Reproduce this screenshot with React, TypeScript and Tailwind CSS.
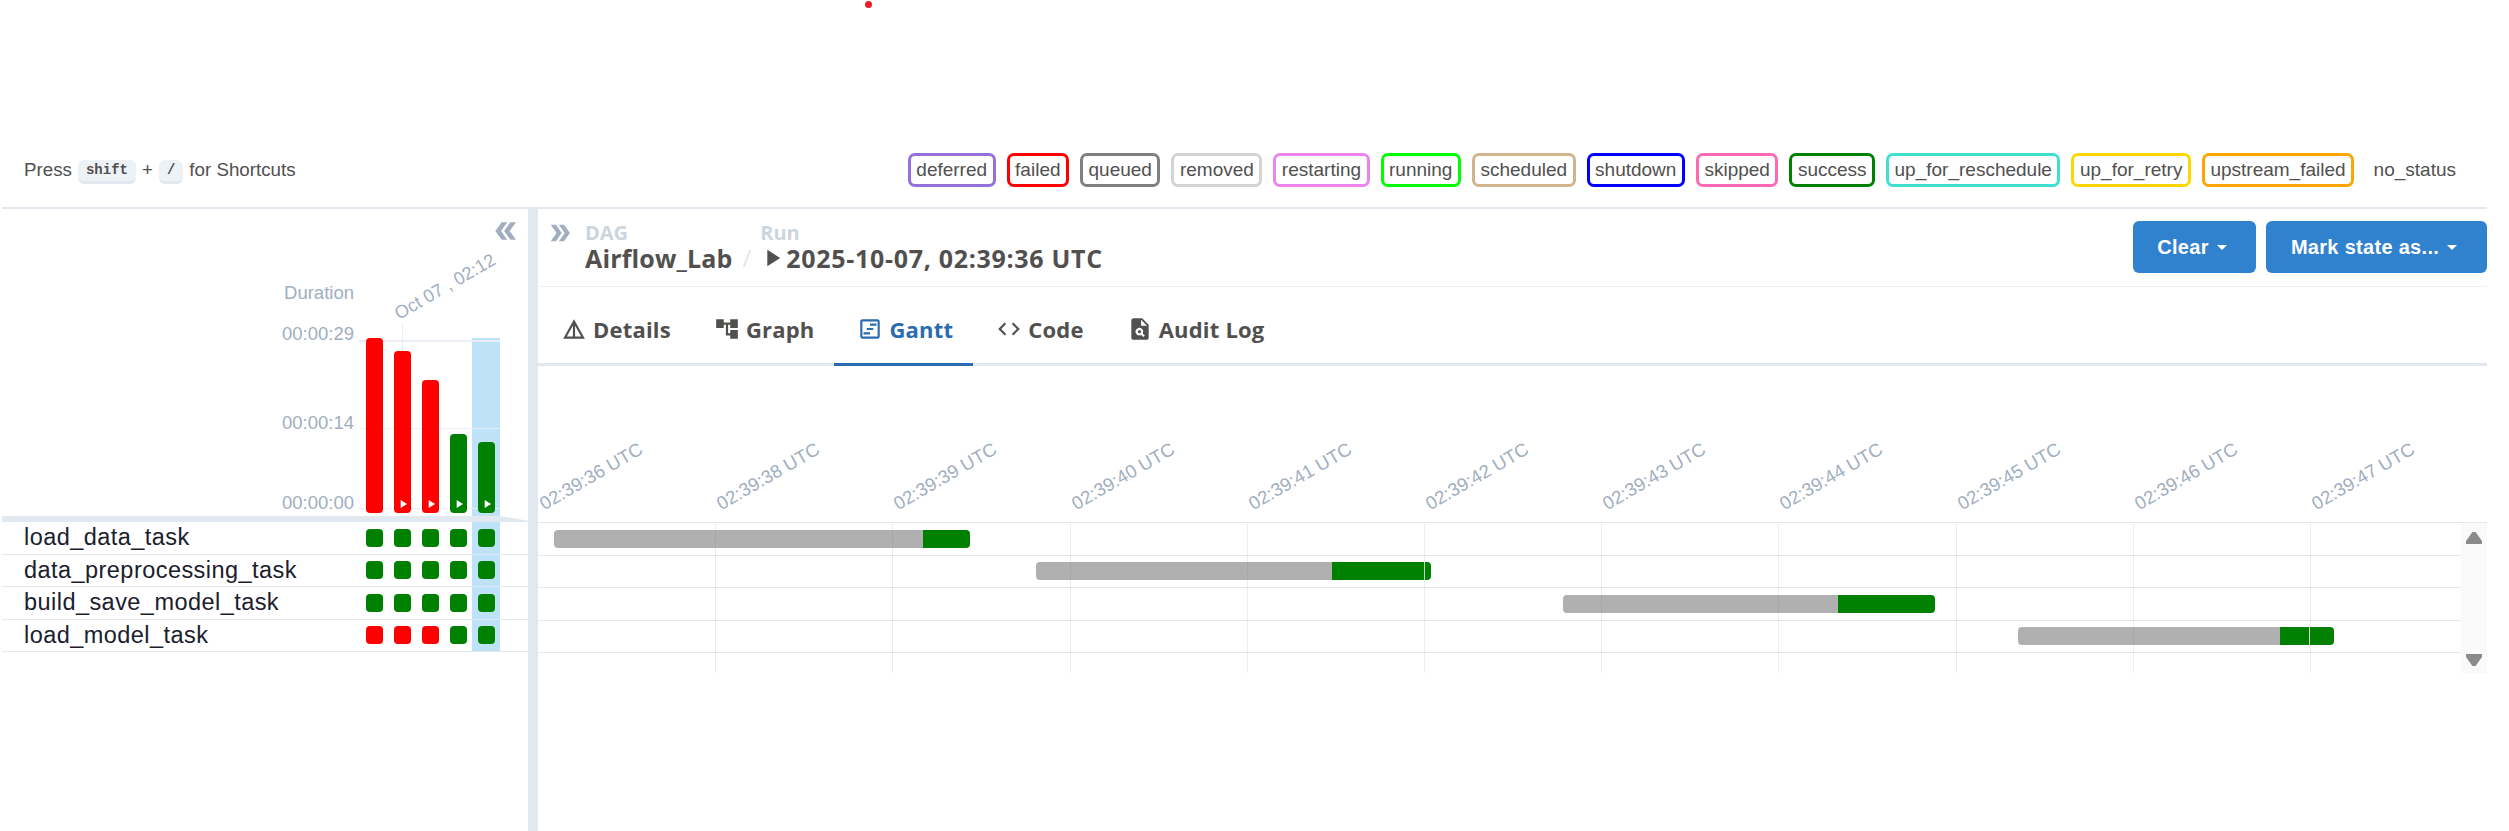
import { MdAccountTree, MdCode, MdDetails, MdDoubleArrow, MdOutlineViewTimeline, MdPlagiarism, MdPlayArrow, MdArrowDropDown } from 'react-icons/md';

const legend = [
  { label: 'deferred', border: 'border-[#9370db]' },
  { label: 'failed', border: 'border-[#ff0000]' },
  { label: 'queued', border: 'border-[#808080]' },
  { label: 'removed', border: 'border-[#d3d3d3]' },
  { label: 'restarting', border: 'border-[#ee82ee]' },
  { label: 'running', border: 'border-[#00ff00]' },
  { label: 'scheduled', border: 'border-[#d2b48c]' },
  { label: 'shutdown', border: 'border-[#0000ff]' },
  { label: 'skipped', border: 'border-[#ff69b4]' },
  { label: 'success', border: 'border-[#008000]' },
  { label: 'up_for_reschedule', border: 'border-[#40e0d0]' },
  { label: 'up_for_retry', border: 'border-[#ffd700]' },
  { label: 'upstream_failed', border: 'border-[#ffa500]' },
  { label: 'no_status', border: 'border-transparent' },
];

const durationBars = [
  { height: 'h-[175px]', color: 'bg-[#ff0000]', play: false },
  { height: 'h-[162px]', color: 'bg-[#ff0000]', play: true },
  { height: 'h-[133px]', color: 'bg-[#ff0000]', play: true },
  { height: 'h-[79px]', color: 'bg-[#008000]', play: true },
  { height: 'h-[71px]', color: 'bg-[#008000]', play: true },
];

const tasks = [
  { name: 'load_data_task', states: ['bg-[#008000]', 'bg-[#008000]', 'bg-[#008000]', 'bg-[#008000]', 'bg-[#008000]'] },
  { name: 'data_preprocessing_task', states: ['bg-[#008000]', 'bg-[#008000]', 'bg-[#008000]', 'bg-[#008000]', 'bg-[#008000]'] },
  { name: 'build_save_model_task', states: ['bg-[#008000]', 'bg-[#008000]', 'bg-[#008000]', 'bg-[#008000]', 'bg-[#008000]'] },
  { name: 'load_model_task', states: ['bg-[#ff0000]', 'bg-[#ff0000]', 'bg-[#ff0000]', 'bg-[#008000]', 'bg-[#008000]'] },
];

const ticks = ['02:39:36', '02:39:38', '02:39:39', '02:39:40', '02:39:41', '02:39:42', '02:39:43', '02:39:44', '02:39:45', '02:39:46', '02:39:47'];

const ganttRows = [
  { offset: 'ml-[16px]', queued: 'w-[369px]', run: 'w-[47px]', mark: '' },
  { offset: 'ml-[498px]', queued: 'w-[296px]', run: 'w-[99px]', mark: 'ml-[92px]' },
  { offset: 'ml-[1025px]', queued: 'w-[275px]', run: 'w-[97px]', mark: '' },
  { offset: 'ml-[1480px]', queued: 'w-[262px]', run: 'w-[54px]', mark: 'ml-[29px]' },
];

const tabs = [
  { label: 'Details', icon: MdDetails, active: false },
  { label: 'Graph', icon: MdAccountTree, active: false },
  { label: 'Gantt', icon: MdOutlineViewTimeline, active: true },
  { label: 'Code', icon: MdCode, active: false },
  { label: 'Audit Log', icon: MdPlagiarism, active: false },
];

function Kbd({ children }: { children: string }) {
  return (
    <span className="mt-[3px] inline-flex h-[24px] items-center rounded-[6px] border-b-[3px] border-[#e2e8f0] bg-[#edf2f7] px-[8px] font-['Liberation_Mono',monospace] text-[14px] font-bold text-[#51504f]">
      {children}
    </span>
  );
}

function ActionButton({ label, width }: { label: string; width: string }) {
  return (
    <button className={`flex h-[52px] items-center justify-center rounded-[6px] bg-[#3182ce] pr-[4px] text-[20px] font-bold tracking-[0.3px] text-white ${width}`}>
      {label}
      <MdArrowDropDown className="ml-[1px] -mr-[6px]" size={24} />
    </button>
  );
}

export default function App() {
  return (
    <div className="flex h-[831px] w-full flex-col overflow-hidden bg-white font-['Liberation_Sans',Arial,sans-serif] text-[#51504f]">
      <div className="h-[153px] shrink-0">
        <div className="ml-[865px] mt-px h-[7px] w-[7px] rounded-full bg-[#ed1c24]" />
      </div>

      <div className="ml-[2px] mr-[22px] flex h-[56px] shrink-0 items-start justify-between border-b-2 border-[#e2e8f0] pl-[22px] pr-[22.5px]">
        <div className="flex h-[34px] items-center gap-[6px] text-[18.75px]">
          <span>Press</span>
          <Kbd>shift</Kbd>
          <span>+</span>
          <Kbd>/</Kbd>
          <span>for Shortcuts</span>
        </div>
        <div className="flex gap-[11px]">
          {legend.map((item) => (
            <span key={item.label} className={`flex h-[34px] items-center rounded-[7px] border-[3px] px-[5.5px] text-[19px] ${item.border}`}>
              {item.label}
            </span>
          ))}
        </div>
      </div>

      <div className="flex min-h-0 flex-1">
        <div className="w-[528px] shrink-0">
          <div className="relative h-[307px]">
            <div className="flex justify-end pr-[7px] pt-[7px]">
              <MdDoubleArrow className="rotate-180 text-[#a0aec0]" size={30} />
            </div>
            <span className="absolute left-[403px] top-[91px] origin-bottom-left -rotate-[30deg] whitespace-nowrap text-[18px] text-[#a0aec0]">
              Oct 07 , 02:12
            </span>
            <div className="absolute left-0 top-[74px] flex">
              <div className="flex w-[354px] flex-col items-end text-[18.5px] leading-[20px] text-[#a0aec0]">
                <span>Duration</span>
                <span className="mt-[21px]">00:00:29</span>
                <span className="mt-[69px]">00:00:14</span>
                <span className="mt-[60px]">00:00:00</span>
              </div>
              <div className="relative ml-[5px] h-[233px] w-[141px]">
                <div className="absolute left-[113px] top-[55px] h-[178px] w-[28px] bg-[#bee3f8]" />
                <div className="absolute left-[43px] top-[41px] h-[190px] w-px bg-[#e8edf7]" />
                <div className="absolute left-0 top-[57px] h-[2px] w-full bg-[#e8edf7]" />
                <div className="absolute left-0 top-[145px] h-px w-full bg-[#e8edf7]" />
                <div className="absolute left-0 top-[225px] h-px w-full bg-[#e8edf7]" />
                <div className="absolute bottom-[3px] left-[7px] flex items-end gap-[11px]">
                  {durationBars.map((bar, i) => (
                    <div key={i} className={`flex w-[17px] items-end justify-center rounded-[4px] pb-[2px] ${bar.height} ${bar.color}`}>
                      {bar.play && <MdPlayArrow className="text-white" size={14} />}
                    </div>
                  ))}
                </div>
              </div>
            </div>
          </div>

          <div className="ml-[2px] h-[6px] bg-[#e2e8f0] [clip-path:polygon(0_0,498px_0,100%_80%,100%_100%,0_100%)]" />

          <div className="ml-[2px]">
            {tasks.map((task) => (
              <div key={task.name} className="flex h-[32.5px] items-stretch border-b border-[#e2e8f0]">
                <div className="flex w-[358px] items-center pl-[22px] text-[23.5px] leading-none tracking-[0.45px] text-[#1a202c]">
                  {task.name}
                </div>
                {task.states.map((state, i) => (
                  <div key={i} className={`flex w-[28px] items-center justify-center ${i === 4 ? 'bg-[#bee3f8]' : ''}`}>
                    <div className={`h-[18px] w-[17px] rounded-[4px] ${state}`} />
                  </div>
                ))}
              </div>
            ))}
          </div>
        </div>

        <div className="w-[10px] shrink-0 bg-[#e2e8f0]" />

        <div className="flex min-w-0 flex-1 flex-col">
          <div className="mr-[22px] flex h-[78px] shrink-0 justify-between border-b border-[#edf2f7] pt-[12px]">
            <div className="flex font-['Open_Sans',sans-serif] font-bold">
              <MdDoubleArrow className="ml-[8px] -mt-[2px] text-[#a0aec0]" size={28} />
              <div className="ml-[11px] flex flex-col">
                <span className="mt-[1px] text-[20px] leading-[22px] text-[#cbd5e0]">DAG</span>
                <span className="-mt-[1px] text-[25px] leading-[30px] tracking-[0.15px]">Airflow_Lab</span>
              </div>
              <span className="ml-[10px] mt-[22px] text-[24px] font-normal leading-[30px] text-[#e2e8f0]">/</span>
              <div className="ml-[9px] flex flex-col">
                <span className="mt-[1px] text-[20px] leading-[22px] text-[#cbd5e0]">Run</span>
                <span className="-mt-[1px] flex items-center text-[25px] leading-[30px] tracking-[0.7px]">
                  <MdPlayArrow className="-ml-[2px]" size={28} />
                  2025-10-07, 02:39:36 UTC
                </span>
              </div>
            </div>
            <div className="flex gap-[10px]">
              <ActionButton label="Clear" width="w-[123px]" />
              <ActionButton label="Mark state as..." width="w-[221px]" />
            </div>
          </div>

          <div className="mr-[22px] flex h-[79px] shrink-0 items-stretch border-b-[3px] border-[#e2e8f0] font-['Open_Sans',sans-serif] text-[22px] font-bold tracking-[0.2px]">
            {tabs.map((tab) => (
              <div key={tab.label} className={`-mb-[3px] flex items-center gap-[6px] border-b-[3px] pl-[23px] pr-[20px] pt-[8px] ${tab.active ? 'border-[#2b6cb0] text-[#2b6cb0]' : 'border-transparent'}`}>
                <tab.icon size={26} />
                {tab.label}
              </div>
            ))}
          </div>

          <div className="flex h-[156px] shrink-0 items-end pb-[9px] pl-[8px]">
            {ticks.map((tick) => (
              <div key={tick} className="w-[177.2px] shrink-0">
                <span className="block origin-bottom-left -rotate-[30deg] whitespace-nowrap text-[18.5px] leading-none text-[#a0aec0]">
                  {tick} UTC
                </span>
              </div>
            ))}
          </div>

          <div className="mr-[22px] flex h-[151px] shrink-0 border-t border-[#e2e8f0]">
            <div className="relative min-w-0 flex-1">
              {ganttRows.map((row, i) => (
                <div key={i} className="flex h-[32.5px] items-center border-b border-[#e2e8f0]">
                  <div className={`flex h-[18px] overflow-hidden rounded-[4px] ${row.offset}`}>
                    <div className={`bg-[#b0b0b0] ${row.queued}`} />
                    <div className={`bg-[#008000] ${row.run}`}>
                      {row.mark && <div className={`h-full w-px bg-[#cfe3cf] ${row.mark}`} />}
                    </div>
                  </div>
                </div>
              ))}
              <div className="pointer-events-none absolute inset-y-0 left-px flex">
                {ticks.slice(0, 10).map((tick) => (
                  <div key={tick} className="w-[177.2px] shrink-0 border-r border-[#71717120]" />
                ))}
              </div>
            </div>
            <div className="flex w-[26px] shrink-0 flex-col items-start justify-between border-r-[3px] border-[#fafafa] bg-[#fafafa] pb-[7px] pl-[5px] pt-[9px]">
              <div className="h-[12px] w-[16px] bg-[#8b8b8b] [clip-path:polygon(40%_0,60%_0,100%_75%,100%_100%,0_100%,0_75%)]" />
              <div className="h-[12px] w-[16px] bg-[#8b8b8b] [clip-path:polygon(0_0,100%_0,100%_25%,60%_100%,40%_100%,0_25%)]" />
            </div>
          </div>
        </div>
      </div>
    </div>
  );
}
